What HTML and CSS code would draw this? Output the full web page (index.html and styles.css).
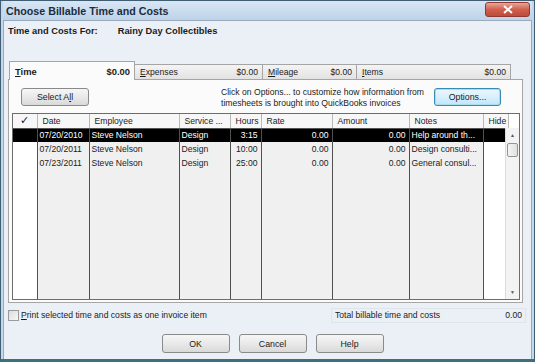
FILE: index.html
```html
<!DOCTYPE html>
<html lang="en">
<head>
  <meta charset="UTF-8">
  <title>Choose Billable Time and Costs</title>
  <link rel="stylesheet" href="styles.css">
</head>
<body>
  <div class="window">
    <div class="titlebar">
      <span class="title">Choose Billable Time and Costs</span>
      <span class="close">
        <svg width="12" height="9" viewBox="0 0 12 9"><path d="M2 1 L10 8 M10 1 L2 8" stroke="#fff" stroke-width="2"/></svg>
      </span>
    </div>
    <div class="content">
      <div class="for-row">
        <span class="for-label">Time and Costs For:</span>
        <span class="customer">Rainy Day Collectibles</span>
      </div>

      <div class="tabs">
        <div class="tab active tab-time"><span><u>T</u>ime</span><span>$0.00</span></div>
        <div class="tab tab-expenses"><span><u>E</u>xpenses</span><span>$0.00</span></div>
        <div class="tab tab-mileage"><span><u>M</u>ileage</span><span>$0.00</span></div>
        <div class="tab tab-items"><span><u>I</u>tems</span><span>$0.00</span></div>
      </div>

      <div class="panel">
        <div class="panel-top">
          <button class="btn btn-select">Select A<u>l</u>l</button>
          <p class="hint">Click on Options... to customize how information from<br>timesheets is brought into QuickBooks invoices</p>
          <button class="btn btn-options">Options...</button>
        </div>

        <div class="grid">
          <table>
            <colgroup>
              <col style="width:24px">
              <col style="width:52px">
              <col style="width:90px">
              <col style="width:51px">
              <col style="width:31px">
              <col style="width:71px">
              <col style="width:77px">
              <col style="width:74px">
              <col style="width:25px">
            </colgroup>
            <thead>
              <tr>
                <th class="check">&#10003;</th>
                <th>Date</th>
                <th>Employee</th>
                <th>Service ...</th>
                <th>Hours</th>
                <th>Rate</th>
                <th>Amount</th>
                <th>Notes</th>
                <th>Hide</th>
              </tr>
            </thead>
            <tbody>
              <tr class="selected">
                <td class="edit"></td>
                <td>07/20/2010</td>
                <td>Steve Nelson</td>
                <td>Design</td>
                <td class="num">3:15</td>
                <td class="num">0.00</td>
                <td class="num">0.00</td>
                <td>Help around th...</td>
                <td class="edit"></td>
              </tr>
              <tr>
                <td class="edit"></td>
                <td>07/20/2011</td>
                <td>Steve Nelson</td>
                <td>Design</td>
                <td class="num">10:00</td>
                <td class="num">0.00</td>
                <td class="num">0.00</td>
                <td>Design consulti...</td>
                <td class="edit"></td>
              </tr>
              <tr>
                <td class="edit"></td>
                <td>07/23/2011</td>
                <td>Steve Nelson</td>
                <td>Design</td>
                <td class="num">25:00</td>
                <td class="num">0.00</td>
                <td class="num">0.00</td>
                <td>General consul...</td>
                <td class="edit"></td>
              </tr>
              <tr class="filler">
                <td class="edit"></td><td></td><td></td><td></td><td></td><td></td><td></td><td></td><td class="edit"></td>
              </tr>
            </tbody>
          </table>
          <div class="scrollbar">
            <span class="arrow">&#9650;</span>
            <span class="thumb"></span>
            <span class="track"></span>
            <span class="arrow">&#9660;</span>
          </div>
        </div>
      </div>

      <div class="footer-row">
        <label class="print-option"><span class="checkbox"></span><span><u>P</u>rint selected time and costs as one invoice item</span></label>
        <div class="total">
          <span>Total billable time and costs</span>
          <span>0.00</span>
        </div>
      </div>

      <div class="buttons">
        <button class="btn">OK</button>
        <button class="btn">Cancel</button>
        <button class="btn">Help</button>
      </div>
    </div>
  </div>
</body>
</html>
```

FILE: styles.css
```css
* {
  margin: 0;
  padding: 0;
  box-sizing: border-box;
}

body {
  font-family: "Liberation Sans", Arial, sans-serif;
  font-size: 8.6px;
  color: #1b1b1b;
  background: #ffffff;
}

.window {
  width: 535px;
  height: 362px;
  border: 1px solid #3f5d73;
  border-bottom: 3px solid #3d6f80;
  background: #c4d8ec;
  padding: 0 2px 0 2px;
  display: flex;
  flex-direction: column;
}

.titlebar {
  height: 19px;
  display: flex;
  align-items: center;
  justify-content: space-between;
  padding: 0 2px 0 3px;
  background: linear-gradient(#d9e6f3, #bcd3ea);
}

.title {
  font-size: 10.7px;
  font-weight: bold;
  color: #1d2c3c;
}

.close {
  width: 45px;
  height: 15px;
  margin-top: -2px;
  border: 1px solid #8e3b35;
  border-radius: 3px;
  background: linear-gradient(#eba597, #d0604e 50%, #bf4a38);
  display: flex;
  align-items: center;
  justify-content: center;
}

.content {
  flex: 1;
  background: #ebf0f6;
  border: 1px solid #9aaabb;
  border-bottom: none;
  padding: 0 4px 0 4px;
  display: flex;
  flex-direction: column;
}

.for-row {
  display: flex;
  font-weight: bold;
  font-size: 9.3px;
  padding-top: 5px;
  height: 40px;
}

.customer {
  margin-left: 20px;
}

/* tabs */
.tabs {
  display: flex;
  align-items: flex-end;
  height: 18px;
  padding-left: 2px;
  position: relative;
  z-index: 1;
}

.tab {
  height: 15px;
  display: flex;
  justify-content: space-between;
  align-items: center;
  padding: 0 4px 0 5px;
  border: 1px solid #a5a5a5;
  border-bottom: none;
  background: linear-gradient(#f4f4f4, #e2e2e2);
  margin-left: -1px;
}

.tab.active {
  background: #fbfbfb;
  font-weight: bold;
  font-size: 9.4px;
  margin-bottom: -1px;
  height: 19px;
  padding-top: 1px;
}

.tab-time { width: 126px; }
.tab-expenses { width: 129px; }
.tab-mileage { width: 95px; }
.tab-items { width: 155px; }

.panel {
  background: #fbfbfb;
  border: 1px solid #a5a5a5;
  width: 515px;
  padding: 0 2px 2px 3px;
}

.panel-top {
  height: 33px;
  display: flex;
  align-items: flex-start;
  padding: 8px 0 0 9px;
}

.btn {
  font-family: "Liberation Sans", Arial, sans-serif;
  font-size: 8.8px;
  color: #1b1b1b;
  height: 19px;
  border: 1px solid #8a8a8a;
  border-radius: 3px;
  background: linear-gradient(#f6f6f6, #e9e9e9 50%, #d9d9d9);
}

.btn-select {
  width: 68px;
  height: 18px;
}

.hint {
  margin-left: 132px;
  width: 212px;
  line-height: 11px;
  margin-top: -1px;
  white-space: nowrap;
}

.btn-options {
  width: 67px;
  height: 18px;
  margin-left: 1px;
  border: 1px solid #3b8ab5;
  box-shadow: 0 0 0 1px #a9dbf1 inset;
  background: linear-gradient(#eaf6fd, #d9f0fc 50%, #bee6fd);
}

/* grid */
.grid {
  display: flex;
  border: 1px solid #6d6d6d;
  height: 187px;
  position: relative;
  background: #ffffff;
}

table {
  border-collapse: collapse;
  table-layout: fixed;
  width: 495px;
}

th {
  height: 14px;
  font-weight: normal;
  text-align: left;
  padding: 0 5px;
  background: #f7f7f7;
  border-right: 1px solid #b8b8b8;
  border-bottom: 1px solid #555;
  white-space: nowrap;
  overflow: hidden;
}

th.check {
  text-align: center;
  font-size: 11px;
}

td {
  height: 14px;
  padding: 0 3px 0 2px;
  border-right: 1px solid #505050;
  background: #f0f0f0;
  white-space: nowrap;
  overflow: hidden;
}

td.num {
  text-align: right;
}

td.edit {
  background: #ffffff;
}

tr.selected td {
  background: #000000;
  color: #ffffff;
}

tr.filler td {
  height: auto;
}

.scrollbar {
  width: 14px;
  margin-top: 14px;
  border-left: 1px solid #dcdcdc;
  display: flex;
  flex-direction: column;
  background: #f3f3f3;
  position: absolute;
  right: 0;
  top: 0;
  bottom: 0;
}

.arrow {
  height: 14px;
  font-size: 5px;
  color: #555;
  display: flex;
  align-items: center;
  justify-content: center;
}

.thumb {
  height: 14px;
  margin: 1px 1px 0 1px;
  border: 1px solid #959595;
  border-radius: 2px;
  background: linear-gradient(90deg, #f4f4f4, #e0e0e0);
}

.track {
  flex: 1;
}

/* footer */
.footer-row {
  display: flex;
  justify-content: space-between;
  align-items: center;
  margin-top: 4px;
  height: 16px;
}

.print-option {
  display: flex;
  align-items: center;
  gap: 2px;
}

.checkbox {
  width: 11px;
  height: 11px;
  border: 1px solid #9a9a9a;
  background: linear-gradient(135deg, #dcdcdc, #f8f8f8);
}

.total {
  width: 195px;
  height: 15px;
  display: flex;
  justify-content: space-between;
  align-items: center;
  padding: 0 3px 0 3px;
  border: 1px solid #dfe4ea;
  margin-right: 1px;
}

.buttons {
  display: flex;
  justify-content: center;
  gap: 9px;
  margin-top: 11px;
  padding-left: 10px;
}

.buttons .btn {
  width: 68px;
}
```
